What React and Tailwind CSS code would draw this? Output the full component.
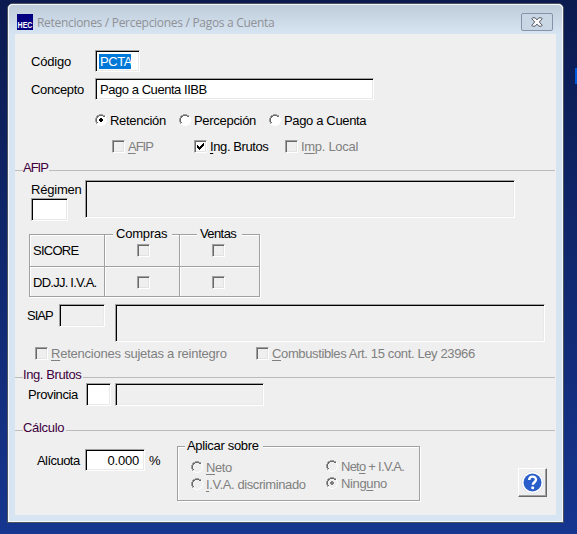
import React from "react";

function T({ className = "", children }) {
  return (
    <span className={`block h-[14px] shrink-0 text-[13px] leading-[16px] whitespace-pre ${className}`}>
      {children}
    </span>
  );
}

function Field({ className = "", children }) {
  return (
    <div
      className={`flex shrink-0 items-start overflow-hidden border border-t-[#a0a0a0] border-l-[#a0a0a0] border-r-white border-b-white shadow-[inset_1px_1px_0_#000,inset_-1px_-1px_0_#e9e9e9] ${className}`}
    >
      {children}
    </div>
  );
}

function Check({ className = "", checked = false }) {
  return (
    <span
      className={`block h-[13px] w-[13px] shrink-0 border border-t-[#a0a0a0] border-l-[#a0a0a0] border-r-white border-b-white shadow-[inset_1px_1px_0_#696969,inset_-1px_-1px_0_#e3e3e3] ${checked ? "bg-white" : ""} ${className}`}
    >
      {checked && (
        <svg width="11" height="11" viewBox="0 0 11 11" shapeRendering="crispEdges">
          <path d="M2 4h1v1h1v1h1v-1h1v-1h1v-1h1v-1h1v3h-1v1h-1v1h-1v1h-1v1h-1v-1h-1v-1h-1z" fill="#000" />
        </svg>
      )}
    </span>
  );
}

function Radio({ className = "", selected = false, disabled = false }) {
  return (
    <svg className={`block shrink-0 ${className}`} width="12" height="12" viewBox="0 0 12 12" shapeRendering="crispEdges">
      <path d="M4 1h4v1h2v2h1v4h-1v2h-2v1h-4v-1h-2v-2h-1v-4h1v-2h2z" fill={disabled ? "#efefef" : "#fff"} />
      <path d="M4 0h4v1h-4zM2 1h2v1h-2zM8 1h2v1h-2zM1 2h1v2h-1zM0 4h1v4h-1zM1 8h1v2h-1z" fill="#a0a0a0" />
      <path d="M4 1h4v1h-4zM2 2h2v1h-1v1h-1zM8 2h2v1h-2zM1 4h1v4h-1zM2 8h1v1h-1z" fill="#696969" />
      <path d="M10 2h1v2h-1zM11 4h1v4h-1zM10 8h1v2h-1zM8 10h2v1h-2zM4 11h4v1h-4zM2 10h2v1h-2z" fill="#fff" />
      {selected && <path d="M5 4h2v1h1v2h-1v1h-2v-1h-1v-2h1z" fill={disabled ? "#808080" : "#000"} />}
    </svg>
  );
}

function Section({ className = "", width, children }) {
  return (
    <div className={`flex h-[14px] shrink-0 ${className}`}>
      <div className="mt-[10px] h-px w-2 bg-[#bcbcbc]" />
      <T className={`text-[#400040] ${width}`}>{children}</T>
      <div className="mt-[10px] mr-px h-px flex-1 bg-[#bcbcbc]" />
    </div>
  );
}

const U = ({ children }) => <span className="underline underline-offset-2">{children}</span>;

export default function App() {
  return (
    <div className="h-[534px] w-[577px] overflow-hidden bg-linear-to-b from-[#0b1b50] to-[#15358f] pt-[3px] pl-[7px] font-['Liberation_Sans',Arial,sans-serif] text-black">
      <div className="absolute top-[68px] left-[575px] h-4 w-[2px] bg-[#0058dc]" />
      <div className="flex h-[520px] w-[557px] flex-col rounded-t-[6px] border border-[#4b535c] bg-[#d7e4f2] shadow-[inset_0_0_0_1px_#f3f6fa]">
        <div className="flex h-[30px] shrink-0 rounded-t-[5px] bg-linear-to-b from-[#becbd9] to-[#d7e4f2] pl-[9px] shadow-[inset_0_1px_0_#f3f6fa,inset_1px_0_0_#f3f6fa,inset_-1px_0_0_#f3f6fa]">
          <div className="mt-[10px] flex h-4 w-4 shrink-0 items-end justify-center bg-[#000080] pb-px">
            <span className="scale-x-[.74] text-[9.5px] leading-[9px] font-bold text-white">HEC</span>
          </div>
          <span className="mt-[10px] ml-1 w-[240px] font-['Open_Sans','Noto_Sans',sans-serif] text-[12px] leading-[18px] tracking-[-0.3px] whitespace-pre text-[#8f9296]">
            Retenciones / Percepciones / Pagos a Cuenta
          </span>
          <div className="mt-[9px] ml-[244px] flex h-[18px] w-8 shrink-0 items-center justify-center rounded-[2px] border border-[#8593aa] bg-[#c9d6e4]">
            <svg width="12" height="10" viewBox="0 0 12 10">
              <path
                d="M1.5.8h2.7L6 2.9 7.8.8h2.7l.7 1L8.3 5l2.9 3.2-.7 1H7.8L6 7.1 4.2 9.2H1.5l-.7-1L3.7 5 .8 1.8z"
                fill="#fafafa"
                stroke="#535966"
              />
            </svg>
          </div>
        </div>

        <div className="ml-[7px] flex h-[481px] w-[541px] shrink-0 flex-col bg-[#efefef] pt-4">
          <div className="flex h-[22px] shrink-0 pl-4">
            <T className="mt-1 w-16 tracking-[-0.2px]">Código</T>
            <Field className="h-[22px] w-[45px] bg-white pt-[3px] pl-[3px]">
              <T className="h-[15px] w-8 bg-[#0078d7] pl-px tracking-[-0.4px] text-white">PCTA</T>
            </Field>
          </div>
          <div className="mt-[6px] flex h-[22px] shrink-0 pl-4">
            <T className="mt-1 w-16 tracking-[-0.35px]">Concepto</T>
            <Field className="h-[22px] w-[279px] bg-white pt-[3px] pl-1">
              <T className="tracking-[-0.45px]">Pago a Cuenta IIBB</T>
            </Field>
          </div>
          <div className="mt-[13px] flex h-[14px] shrink-0 pl-20">
            <Radio className="mt-px" selected />
            <T className="ml-[3px] w-[69px] tracking-[-0.3px]">Retención</T>
            <Radio className="mt-px" />
            <T className="ml-[3px] w-[75px] tracking-[-0.3px]">Percepción</T>
            <Radio className="mt-px" />
            <T className="ml-[3px] tracking-[-0.35px]">Pago a Cuenta</T>
          </div>
          <div className="mt-3 flex h-[14px] shrink-0 pl-[97px] text-[#808080]">
            <Check className="mt-px" />
            <T className="ml-[3px] w-[66px] tracking-[-1px]"><U>A</U>FIP</T>
            <Check className="mt-px" checked />
            <T className="ml-[3px] w-[75px] tracking-[-0.4px] text-black"><U>I</U>ng. Brutos</T>
            <Check className="mt-px" />
            <T className="ml-[3px] tracking-[-0.3px]">I<U>m</U>p. Local</T>
          </div>

          <Section className="mt-[7px]" width="w-[26px] tracking-[-1px]">AFIP</Section>
          <div className="mt-[6px] flex h-[41px] shrink-0 pl-4">
            <div className="flex w-[54px] flex-col pt-[2px]">
              <T className="tracking-[-0.2px]">Régimen</T>
              <Field className="mt-[2px] h-[23px] w-[37px] bg-white" />
            </div>
            <Field className="h-[38px] w-[430px]" />
          </div>

          <div className="relative mt-[13px] ml-[14px] grid h-[63px] w-[231px] shrink-0 grid-cols-[75px_75px_1fr] grid-rows-[32px_1fr] border border-[#a0a0a0] shadow-[1px_1px_0_#fff,inset_1px_1px_0_#fff]">
            <T className="absolute -top-[9px] left-[83px] w-[59px] bg-[#efefef] pl-[3px] tracking-[-0.2px]">Compras</T>
            <T className="absolute -top-[9px] left-[167px] w-[45px] bg-[#efefef] pl-[3px] tracking-[-0.6px]">Ventas</T>
            <div className="border-r border-b border-[#a0a0a0] pt-[8px] pl-[3px] shadow-[0_1px_0_#fff]">
              <T className="tracking-[-0.75px]">SICORE</T>
            </div>
            <div className="flex border-r border-b border-[#a0a0a0] pt-[9px] pl-8 shadow-[0_1px_0_#fff,inset_1px_0_0_#fff]"><Check /></div>
            <div className="flex border-b border-[#a0a0a0] pt-[9px] pl-8 shadow-[0_1px_0_#fff,inset_1px_0_0_#fff]"><Check /></div>
            <div className="border-r border-[#a0a0a0] pt-[8px] pl-[3px]">
              <T className="tracking-[-0.75px]">DD.JJ. I.V.A.</T>
            </div>
            <div className="flex border-r border-[#a0a0a0] pt-[9px] pl-8 shadow-[inset_1px_0_0_#fff]"><Check /></div>
            <div className="flex pt-[9px] pl-8 shadow-[inset_1px_0_0_#fff]"><Check /></div>
          </div>

          <div className="mt-[7px] flex h-[38px] shrink-0 pl-3">
            <T className="mt-1 w-8 tracking-[-1px]">SIAP</T>
            <Field className="h-[23px] w-[46px]" />
            <Field className="ml-[10px] h-[38px] w-[430px]" />
          </div>
          <div className="mt-1 flex h-[14px] shrink-0 pl-5 text-[#808080]">
            <Check className="mt-px" />
            <T className="ml-[3px] w-[205px] tracking-[-0.23px]"><U>R</U>etenciones sujetas a reintegro</T>
            <Check className="mt-px" />
            <T className="ml-[3px] tracking-[-0.37px]"><U>C</U>ombustibles Art. 15 cont. Ley 23966</T>
          </div>

          <Section className="mt-[7px]" width="w-[60px] tracking-[-0.4px]">Ing. Brutos</Section>
          <div className="mt-[2px] flex h-[23px] shrink-0 pl-[13px]">
            <T className="mt-1 w-[58px] tracking-[-0.4px]">Provincia</T>
            <Field className="h-[23px] w-[25px] bg-white" />
            <Field className="ml-1 h-[23px] w-[149px]" />
          </div>

          <Section className="mt-[14px]" width="w-[43px] tracking-[-0.3px]">Cálculo</Section>
          <div className="mt-1 flex h-[63px] shrink-0 pl-[22px]">
            <T className="mt-[15px] w-12 tracking-[-0.55px]">Alícuota</T>
            <Field className="mt-[11px] h-[22px] w-[60px] justify-end bg-white pt-[3px] pr-[5px]">
              <T className="tracking-[-0.2px]">0.000</T>
            </Field>
            <T className="mt-[15px] ml-1 w-7">%</T>
            <div className="relative mt-2 flex h-[55px] w-[243px] shrink-0 border border-[#a0a0a0] pl-[13px] text-[#808080] shadow-[1px_1px_0_#fff,inset_1px_1px_0_#fff]">
              <T className="absolute -top-[9px] left-[7px] w-[78px] bg-[#efefef] pl-[2px] tracking-[-0.33px] text-black">Aplicar sobre</T>
              <div className="flex w-[135px] flex-col gap-[3px] pt-[13px]">
                <div className="flex"><Radio className="mt-px" disabled /><T className="ml-[3px] tracking-[-0.4px]"><U>N</U>eto</T></div>
                <div className="flex"><Radio className="mt-px" disabled /><T className="ml-[3px] tracking-[-0.4px]"><U>I</U>.V.A. discriminado</T></div>
              </div>
              <div className="flex flex-col gap-[3px] pt-3">
                <div className="flex"><Radio className="mt-px" disabled /><T className="ml-[3px] tracking-[-0.75px]">Net<U>o</U> + I.V.A.</T></div>
                <div className="flex"><Radio className="mt-px" disabled selected /><T className="ml-[3px] tracking-[-0.35px]">Ning<U>u</U>no</T></div>
              </div>
            </div>
            <div className="mt-[30px] ml-[98px] flex h-[29px] w-[29px] shrink-0 items-center justify-center border border-t-white border-l-white border-r-[#696969] border-b-[#696969] shadow-[inset_-1px_-1px_0_#a0a0a0]">
              <svg width="24" height="24" viewBox="0 0 24 24">
                <circle cx="11.5" cy="11.5" r="11" fill="#fff" stroke="#cfd8ea" strokeWidth=".7" />
                <circle cx="11.5" cy="11.5" r="9" fill="#2a5fcb" />
                <path d="M8.2 9.1c0-4.7 6.8-4.4 6.8-.5 0 2.6-3.2 2.6-3.2 5.2" fill="none" stroke="#fff" strokeWidth="2.4" />
                <circle cx="11.7" cy="16.7" r="1.5" fill="#fff" />
              </svg>
            </div>
          </div>
        </div>
      </div>
    </div>
  );
}
